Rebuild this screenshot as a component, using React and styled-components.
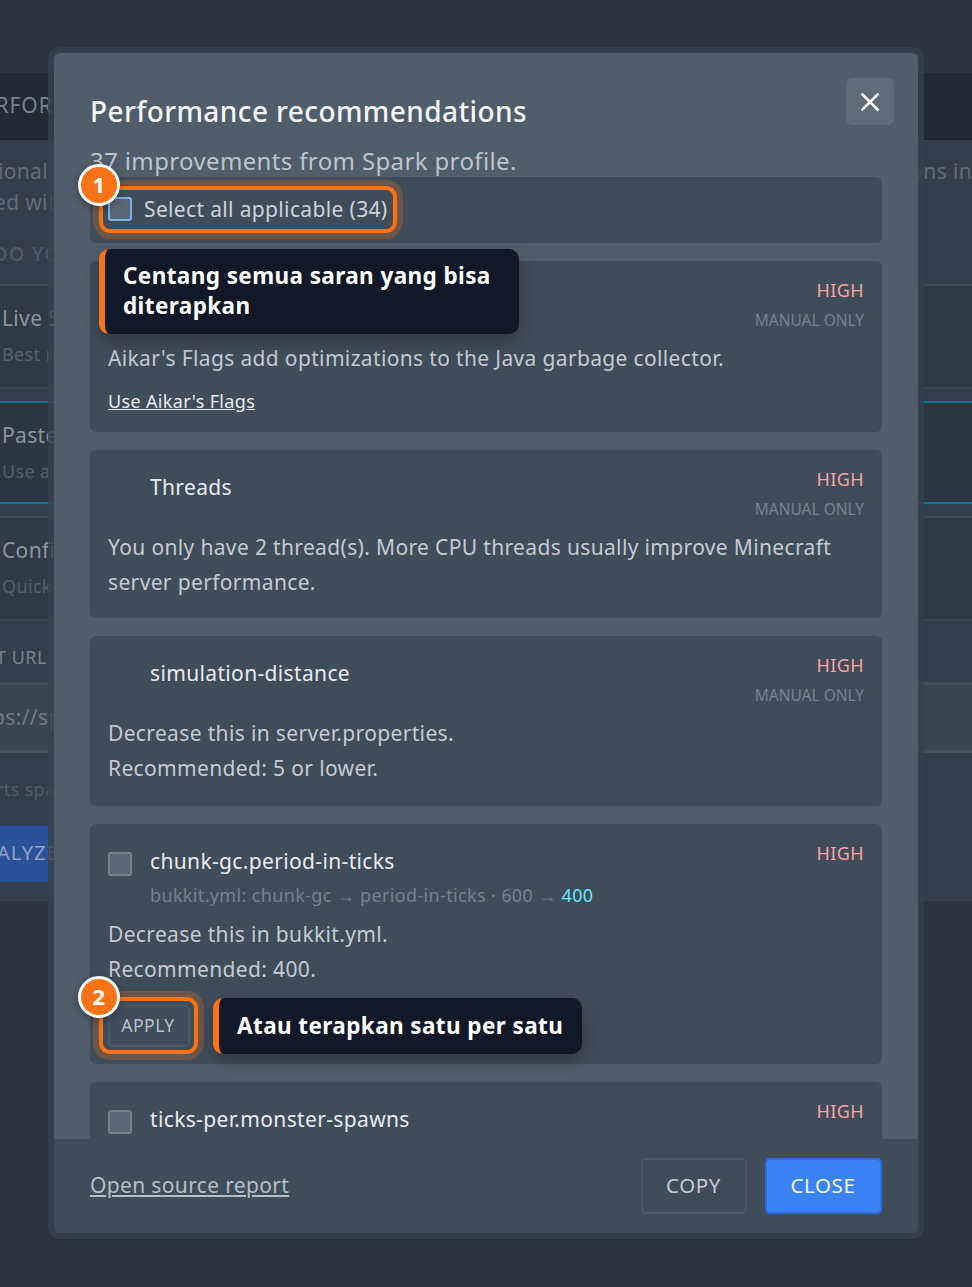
import React from 'react';
import styled, { createGlobalStyle } from 'styled-components';

const Global = createGlobalStyle`
  html, body { margin: 0; padding: 0; background: #2a3441; }
  body { font-family: "Noto Sans", "Open Sans", sans-serif; letter-spacing: .35px; }
  * { box-sizing: border-box; }
`;

const Page = styled.div`
  position: relative;
  width: 972px;
  height: 1287px;
  overflow: hidden;
  background: #2a3441;
  padding-top: 73px;
`;

const Panel = styled.div`
  width: 972px;
  height: 828px;
  background: #323e4b;
  overflow: hidden;
  white-space: nowrap;
`;
const PanelHead = styled.div`
  height: 67px;
  background: #1f2a35;
  border-bottom: 1px solid #1a232c;
  padding-top: 17px;
  font-size: 21px;
  line-height: 30px;
  letter-spacing: 1px;
  color: #76828e;
  margin-bottom: 16px;
`;
const Shifted = styled.span`
  display: block;
  margin-left: ${p => p.$left}px;
`;
const IntroRow = styled.div`
  display: flex;
  justify-content: space-between;
  font-size: 21px;
  line-height: 31px;
  color: #606c78;
  height: 31px;
`;
const BoldLine = styled.div`
  margin-top: 20px;
  height: 31px;
  font-size: 20px;
  line-height: 31px;
  font-weight: 600;
  letter-spacing: 1px;
  color: #4c5865;
  margin-bottom: 15px;
`;
const ModeRow = styled.div`
  height: ${p => p.$h}px;
  padding: ${p => p.$pt}px 0 0 2px;
  background: ${p => (p.$active ? '#2b3743' : '#2e3a46')};
  border-top: ${p => (p.$active ? '2px solid #0e7490' : '2px solid #3a4652')};
  border-bottom: ${p => (p.$active ? '2px solid #0e7490' : '2px solid #3a4652')};
  margin-bottom: ${p => p.$mb}px;
`;
const ModeTitle = styled.div`
  font-size: 21px;
  line-height: 30px;
  color: #8a95a1;
`;
const ModeSub = styled.div`
  margin-top: 7px;
  font-size: 18px;
  line-height: 28px;
  color: #53606c;
`;
const UrlLabel = styled.div`
  margin-top: 21px;
  height: 30px;
  font-size: 18px;
  line-height: 30px;
  letter-spacing: .5px;
  color: #76828e;
`;
const UrlInput = styled.div`
  margin-top: 10px;
  height: 71px;
  background: #394551;
  border-top: 3px solid #424e5a;
  border-bottom: 3px solid #424e5a;
  font-size: 21px;
  line-height: 65px;
  color: #6f7b87;
`;
const Hint = styled.div`
  margin-top: 22px;
  height: 28px;
  font-size: 18px;
  line-height: 28px;
  color: #4f5b67;
`;
const Analyze = styled.div`
  margin-top: 22px;
  height: 57px;
  width: 60px;
  background: #2a5298;
  border-top: 2px solid #264b8c;
  font-size: 20px;
  line-height: 52px;
  letter-spacing: 1px;
  color: #8da3c6;
  overflow: hidden;
`;

const Modal = styled.div`
  position: absolute;
  left: 54px;
  top: 53px;
  width: 864px;
  height: 1180px;
  border-radius: 6px;
  background: #505d6b;
  box-shadow: 0 0 0 6px rgba(52, 65, 78, .8);
  display: flex;
  flex-direction: column;
  overflow: hidden;
`;
const ModalHead = styled.header`
  position: relative;
  height: 124px;
  flex: none;
  padding: 39px 36px 0;
  overflow: hidden;
`;
const Title = styled.h2`
  margin: 0;
  font-size: 28px;
  line-height: 38px;
  font-weight: 500;
  letter-spacing: .41px;
  color: #f3f5f7;
`;
const Subtitle = styled.p`
  margin: 14px 0 0;
  font-size: 24px;
  line-height: 34px;
  letter-spacing: .36px;
  color: #bcc5ce;
`;
const CloseX = styled.button`
  position: absolute;
  right: 24px;
  top: 25px;
  width: 48px;
  height: 47px;
  border: 0;
  border-radius: 6px;
  background: #5e6b79;
  display: flex;
  align-items: center;
  justify-content: center;
  padding: 0;
`;
const List = styled.div`
  flex: 1;
  min-height: 0;
  overflow: hidden;
  padding: 0 36px;
  display: flex;
  flex-direction: column;
  gap: 18px;
`;
const SelectRow = styled.label`
  height: 66px;
  flex: none;
  background: #3f4c5a;
  border-radius: 6px;
  padding: 0 18px 2px;
  display: flex;
  align-items: center;
  gap: 12px;
  font-size: 21px;
  color: #ccd3da;
`;
const Check = styled.span`
  flex: none;
  display: block;
  width: 24px;
  height: 24px;
  border-radius: 3px;
  background: #5a6674;
  border: 2px solid ${p => (p.$focus ? '#7cb0ee' : '#76818d')};
`;
const Card = styled.article`
  flex: none;
  height: ${p => p.$h}px;
  background: #3f4c5a;
  border-radius: 6px;
  padding: 18px 18px 0;
`;
const CardTop = styled.div`
  display: flex;
  justify-content: space-between;
  align-items: flex-start;
`;
const CardLeft = styled.div`
  display: flex;
  gap: 18px;
  align-items: flex-start;
`;
const CheckSlot = styled.span`
  flex: none;
  width: 24px;
  padding-top: 10px;
`;
const CardName = styled.div`
  font-size: 21px;
  line-height: 38px;
  color: #e7ebef;
`;
const Meta = styled.div`
  font-size: 18px;
  line-height: 28px;
  color: #748190;
  margin-top: 1px;
`;
const Accent = styled.span`
  color: #67e8f9;
`;
const Tags = styled.div`
  display: flex;
  flex-direction: column;
  align-items: flex-end;
  margin-top: -1px;
`;
const High = styled.span`
  font-size: 18px;
  line-height: 24px;
  letter-spacing: .4px;
  color: #f7a3a3;
`;
const Manual = styled.span`
  margin-top: 6px;
  font-size: 15.5px;
  line-height: 24px;
  letter-spacing: 0;
  color: #748190;
`;
const Body = styled.p`
  margin: ${p => p.$mt}px 0 0;
  font-size: 21px;
  line-height: 35px;
  color: #c3cbd3;
`;
const DocLink = styled.a`
  display: block;
  margin-top: 11px;
  font-size: 18px;
  line-height: 28px;
  color: #e7ebef;
  text-decoration: underline;
`;
const ApplyBtn = styled.button`
  display: block;
  margin-top: 18px;
  width: 82px;
  height: 42px;
  background: transparent;
  border: 2px solid #4b5866;
  border-radius: 5px;
  font-family: inherit;
  font-size: 17.5px;
  letter-spacing: .5px;
  color: #b6c0ca;
  padding: 0 2px 2px 0;
`;
const Footer = styled.footer`
  flex: none;
  height: 94px;
  background: #3f4c5a;
  padding: 0 36px;
  display: flex;
  align-items: center;
  justify-content: space-between;
`;
const SourceLink = styled.a`
  font-size: 21px;
  color: #b5bfc9;
  text-decoration: underline;
  margin-bottom: 2px;
`;
const FootBtns = styled.div`
  display: flex;
  gap: 18px;
`;
const FootBtn = styled.button`
  height: 56px;
  width: ${p => p.$w}px;
  border-radius: 5px;
  border: 2px solid ${p => (p.$primary ? '#2b6ce8' : '#4b5866')};
  background: ${p => (p.$primary ? '#3b82f6' : 'transparent')};
  color: ${p => (p.$primary ? '#f3f7fd' : '#c3cbd3')};
  font-family: inherit;
  font-size: 20.5px;
  letter-spacing: .6px;
  padding: 0 1px 3px 0;
`;

const Ring = styled.div`
  position: absolute;
  left: ${p => p.$x}px;
  top: ${p => p.$y}px;
  width: ${p => p.$w}px;
  height: ${p => p.$h}px;
  border: 4px solid #f97316;
  border-radius: 11px;
  box-shadow: 0 0 0 6px rgba(249, 115, 22, .25);
`;
const Badge = styled.div`
  position: absolute;
  left: ${p => p.$x}px;
  top: ${p => p.$y}px;
  width: 42px;
  height: 42px;
  border-radius: 50%;
  border: 3px solid #fff;
  background: #f97316;
  color: #fff;
  font-size: 22px;
  font-weight: 700;
  line-height: 35px;
  text-align: center;
  box-shadow: 0 2px 8px rgba(0, 0, 0, .3);
`;
const Tip = styled.div`
  position: absolute;
  left: ${p => p.$x}px;
  top: ${p => p.$y}px;
  width: ${p => p.$w}px;
  height: ${p => p.$h}px;
  background: #111827;
  border-left: 6px solid #f97316;
  border-radius: 10px;
  padding: ${p => p.$py}px 0 0 18px;
  font-size: 22.5px;
  font-weight: 700;
  line-height: 30px;
  letter-spacing: .4px;
  color: #fff;
  box-shadow: 0 8px 20px rgba(0, 0, 0, .25);
`;

export default function App() {
  return (
    <>
      <Global />
      <Page>
        <Panel>
          <PanelHead><Shifted $left={-31}>PERFORMANCE</Shifted></PanelHead>
          <IntroRow>
            <Shifted $left={-40}>Optional</Shifted>
            <Shifted $left={0}>ons in</Shifted>
          </IntroRow>
          <IntroRow><Shifted $left={-6}>ed with</Shifted></IntroRow>
          <BoldLine><Shifted $left={-8}>OO YOU</Shifted></BoldLine>
          <ModeRow $h={105} $pt={17} $mb={12}>
            <ModeTitle>Live Spark</ModeTitle>
            <ModeSub>Best results</ModeSub>
          </ModeRow>
          <ModeRow $active $h={103} $pt={17} $mb={12}>
            <ModeTitle>Paste</ModeTitle>
            <ModeSub>Use a link</ModeSub>
          </ModeRow>
          <ModeRow $h={105} $pt={17} $mb={0}>
            <ModeTitle>Config</ModeTitle>
            <ModeSub>Quick check</ModeSub>
          </ModeRow>
          <UrlLabel><Shifted $left={-4}>T URL</Shifted></UrlLabel>
          <UrlInput><Shifted $left={-8}>ps://spark</Shifted></UrlInput>
          <Hint><Shifted $left={-4}>rts spark</Shifted></Hint>
          <Analyze><Shifted $left={-3}>ALYZE</Shifted></Analyze>
        </Panel>

        <Modal>
          <ModalHead>
            <Title>Performance recommendations</Title>
            <Subtitle>37 improvements from Spark profile.</Subtitle>
            <CloseX aria-label="Close">
              <svg width="24" height="24" viewBox="0 0 24 24" fill="none" stroke="#fff" strokeWidth="2.6" strokeLinecap="square">
                <path d="M4.5 4.5 19.5 19.5M19.5 4.5 4.5 19.5" />
              </svg>
            </CloseX>
          </ModalHead>
          <List>
            <SelectRow><Check $focus />Select all applicable (34)</SelectRow>
            <Card $h={171}>
              <CardTop>
                <CardLeft><CheckSlot /><CardName>Java flags</CardName></CardLeft>
                <Tags><High>HIGH</High><Manual>MANUAL ONLY</Manual></Tags>
              </CardTop>
              <Body $mt={9}>Aikar's Flags add optimizations to the Java garbage collector.</Body>
              <DocLink>Use Aikar's Flags</DocLink>
            </Card>
            <Card $h={168}>
              <CardTop>
                <CardLeft><CheckSlot /><CardName>Threads</CardName></CardLeft>
                <Tags><High>HIGH</High><Manual>MANUAL ONLY</Manual></Tags>
              </CardTop>
              <Body $mt={9}>You only have 2 thread(s). More CPU threads usually improve Minecraft server performance.</Body>
            </Card>
            <Card $h={170}>
              <CardTop>
                <CardLeft><CheckSlot /><CardName>simulation-distance</CardName></CardLeft>
                <Tags><High>HIGH</High><Manual>MANUAL ONLY</Manual></Tags>
              </CardTop>
              <Body $mt={9}>Decrease this in server.properties.<br />Recommended: 5 or lower.</Body>
            </Card>
            <Card $h={240}>
              <CardTop>
                <CardLeft>
                  <CheckSlot><Check /></CheckSlot>
                  <div>
                    <CardName>chunk-gc.period-in-ticks</CardName>
                    <Meta>bukkit.yml: chunk-gc → period-in-ticks · 600 → <Accent>400</Accent></Meta>
                  </div>
                </CardLeft>
                <Tags><High>HIGH</High></Tags>
              </CardTop>
              <Body $mt={8}>Decrease this in bukkit.yml.<br />Recommended: 400.</Body>
              <ApplyBtn>APPLY</ApplyBtn>
            </Card>
            <Card $h={170}>
              <CardTop>
                <CardLeft>
                  <CheckSlot><Check /></CheckSlot>
                  <CardName>ticks-per.monster-spawns</CardName>
                </CardLeft>
                <Tags><High>HIGH</High></Tags>
              </CardTop>
            </Card>
          </List>
          <Footer>
            <SourceLink>Open source report</SourceLink>
            <FootBtns>
              <FootBtn $w={106}>COPY</FootBtn>
              <FootBtn $primary $w={117}>CLOSE</FootBtn>
            </FootBtns>
          </Footer>
        </Modal>

        <Ring $x={99} $y={186} $w={298} $h={47} />
        <Ring $x={99} $y={997} $w={99} $h={57} />
        <Badge $x={78} $y={164}>1</Badge>
        <Badge $x={78} $y={976}>2</Badge>
        <Tip $x={99} $y={249} $w={420} $h={85} $py={12}>Centang semua saran yang bisa diterapkan</Tip>
        <Tip $x={213} $y={998} $w={369} $h={56} $py={13}>Atau terapkan satu per satu</Tip>
      </Page>
    </>
  );
}
